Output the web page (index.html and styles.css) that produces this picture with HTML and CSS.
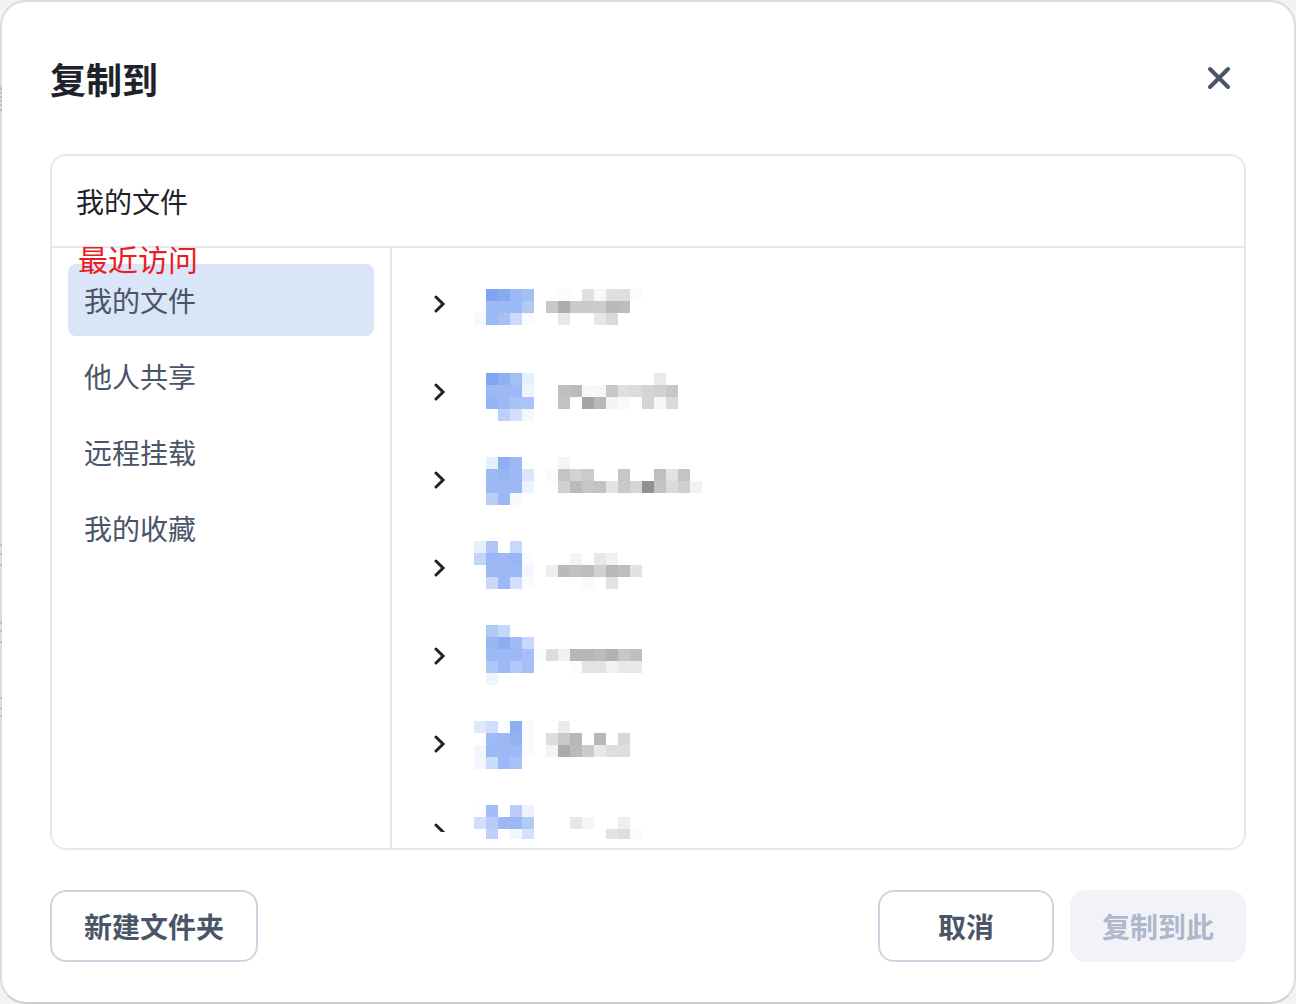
FILE: index.html
```html
<!DOCTYPE html>
<html lang="zh-CN">
<head>
<meta charset="utf-8">
<meta name="viewport" content="width=device-width, initial-scale=1">
<title>复制到</title>
<link rel="stylesheet" href="styles.css">
</head>
<body>
<main class="dialog" role="dialog" aria-labelledby="dialog-title">
  <svg class="edge-marks" width="2" height="720" viewBox="0 0 2 720" aria-hidden="true">
    <path d="M0 87h1M0 89h2M0 93h2M0 97h2M0 101h2M0 105h2M0 110h2M0 545h2M0 554h2M0 565h2M0 621l2 3M0 631h2M0 643l2-2M0 698h2M0 709l2-1M0 716h2"/>
  </svg>
  <header class="dialog-header">
    <h1 class="dialog-title" id="dialog-title">复制到</h1>
    <button class="close" type="button" aria-label="关闭">
      <svg width="24" height="24" viewBox="0 0 24 24" aria-hidden="true"><path d="M3 3l18 18M21 3L3 21"/></svg>
    </button>
  </header>

  <section class="picker">
    <div class="breadcrumb">我的文件</div>
    <div class="picker-body">
      <nav class="sidebar">
        <span class="annotation">最近访问</span>
        <a class="side-item active" href="#mine">我的文件</a>
        <a class="side-item" href="#shared">他人共享</a>
        <a class="side-item" href="#remote">远程挂载</a>
        <a class="side-item" href="#favorites">我的收藏</a>
      </nav>
      <ul class="folders">
        <li class="folder">
          <button class="toggle" type="button" aria-label="展开"><svg width="12" height="18" viewBox="0 0 12 18"><path d="M2 2l7 7-7 7"/></svg></button>
          <svg class="mosaic" width="240" height="88" viewBox="0 0 240 88" aria-hidden="true"><g transform="translate(0 29) scale(12)">
            <rect x="1" y="0" fill="#7fa4f2"/><rect x="2" y="0" fill="#86a9f0"/><rect x="3" y="0"/><rect x="4" y="0" fill="#a4bff6"/><rect x="7" y="0" fill="#fcfcfc"/><rect x="9" y="0" fill="#e0e0e0"/><rect x="10" y="0" fill="#f8f8f8"/><rect x="11" y="0" fill="#e0e0e0"/><rect x="12" y="0" fill="#dedede"/><rect x="13" y="0" fill="#fbfbfb"/>
            <rect x="1" y="1"/><rect x="2" y="1"/><rect x="3" y="1"/><rect x="4" y="1" fill="#b0c9f4"/><rect x="6" y="1" fill="#c8c8c8"/><rect x="7" y="1" fill="#acadaf"/><rect x="8" y="1" fill="#c9cacc"/><rect x="9" y="1" fill="#c9cacc"/><rect x="10" y="1" fill="#cbccce"/><rect x="11" y="1" fill="#b8babc"/><rect x="12" y="1" fill="#bdbdbf"/>
            <rect x="0" y="2" fill="#f4f9ff"/><rect x="1" y="2"/><rect x="2" y="2" fill="#a8c0f5"/><rect x="3" y="2" fill="#cadaf8"/><rect x="4" y="2" fill="#fbfcff"/><rect x="7" y="2" fill="#e8e8e8"/><rect x="10" y="2" fill="#e6e6e6"/><rect x="11" y="2" fill="#dadada"/>
          </g></svg>
        </li>
        <li class="folder">
          <button class="toggle" type="button" aria-label="展开"><svg width="12" height="18" viewBox="0 0 12 18"><path d="M2 2l7 7-7 7"/></svg></button>
          <svg class="mosaic" width="240" height="88" viewBox="0 0 240 88" aria-hidden="true"><g transform="translate(0 25) scale(12)">
            <rect x="1" y="0" fill="#7fa5f3"/><rect x="2" y="0" fill="#8eaff1"/><rect x="3" y="0" fill="#a4bff6"/><rect x="4" y="0" fill="#e6effd"/><rect x="15" y="0" fill="#e8ebea"/>
            <rect x="1" y="1"/><rect x="2" y="1"/><rect x="3" y="1"/><rect x="4" y="1" fill="#eef3fe"/><rect x="7" y="1" fill="#bebfc1"/><rect x="8" y="1" fill="#bcbcbc"/><rect x="9" y="1" fill="#f8f8f8"/><rect x="10" y="1" fill="#f7f7f7"/><rect x="11" y="1" fill="#c7c7c7"/><rect x="12" y="1" fill="#dfdfdf"/><rect x="13" y="1" fill="#dcdcdc"/><rect x="14" y="1" fill="#d4d4d4"/><rect x="15" y="1" fill="#d0d2d2"/><rect x="16" y="1" fill="#c6c7c9"/>
            <rect x="1" y="2" fill="#96b3f4"/><rect x="2" y="2"/><rect x="3" y="2" fill="#a8c1f6"/><rect x="4" y="2" fill="#abc3f7"/><rect x="7" y="2" fill="#c2c3c5"/><rect x="9" y="2" fill="#a4a4a6"/><rect x="10" y="2" fill="#b7b8ba"/><rect x="11" y="2" fill="#f5f5f5"/><rect x="12" y="2" fill="#f9f9f9"/><rect x="14" y="2" fill="#d5d5d5"/><rect x="15" y="2" fill="#f7f7f7"/><rect x="16" y="2" fill="#dbdbdb"/>
            <rect x="2" y="3" fill="#bdd1f8"/><rect x="3" y="3" fill="#d4e0fb"/><rect x="4" y="3" fill="#f5f8ff"/>
          </g></svg>
        </li>
        <li class="folder">
          <button class="toggle" type="button" aria-label="展开"><svg width="12" height="18" viewBox="0 0 12 18"><path d="M2 2l7 7-7 7"/></svg></button>
          <svg class="mosaic" width="240" height="88" viewBox="0 0 240 88" aria-hidden="true"><g transform="translate(0 21) scale(12)">
            <rect x="1" y="0" fill="#e6effc"/><rect x="2" y="0" fill="#8eaff1"/><rect x="3" y="0"/><rect x="7" y="0" fill="#f4f4f4"/>
            <rect x="1" y="1"/><rect x="2" y="1" fill="#97b4f3"/><rect x="3" y="1"/><rect x="4" y="1" fill="#dae6fb"/><rect x="6" y="1" fill="#fbfbfb"/><rect x="7" y="1" fill="#c4c4c4"/><rect x="8" y="1" fill="#d3d3d3"/><rect x="9" y="1" fill="#cbcbcb"/><rect x="12" y="1" fill="#c6c6c6"/><rect x="15" y="1" fill="#bebfc1"/><rect x="16" y="1" fill="#e2e2e2"/><rect x="17" y="1" fill="#c3c4c6"/>
            <rect x="1" y="2"/><rect x="2" y="2"/><rect x="3" y="2"/><rect x="4" y="2" fill="#eaf1ff"/><rect x="7" y="2" fill="#d0d0d0"/><rect x="8" y="2" fill="#b9babc"/><rect x="9" y="2" fill="#c6c6c8"/><rect x="10" y="2" fill="#c2c2c2"/><rect x="11" y="2" fill="#e3e3e3"/><rect x="12" y="2" fill="#c9c9cb"/><rect x="13" y="2" fill="#d5d5d5"/><rect x="14" y="2" fill="#909193"/><rect x="15" y="2" fill="#c2c3c5"/><rect x="16" y="2" fill="#dadada"/><rect x="17" y="2" fill="#cfcfcf"/><rect x="18" y="2" fill="#f2f2f2"/>
            <rect x="1" y="3" fill="#b9cdf8"/><rect x="2" y="3"/><rect x="3" y="3" fill="#f7f9ff"/>
          </g></svg>
        </li>
        <li class="folder">
          <button class="toggle" type="button" aria-label="展开"><svg width="12" height="18" viewBox="0 0 12 18"><path d="M2 2l7 7-7 7"/></svg></button>
          <svg class="mosaic" width="240" height="88" viewBox="0 0 240 88" aria-hidden="true"><g transform="translate(0 17) scale(12)">
            <rect x="0" y="0" fill="#e6effd"/><rect x="1" y="0" fill="#aec7f6"/><rect x="3" y="0" fill="#c7d8fa"/>
            <rect x="0" y="1" fill="#c2d5f8"/><rect x="1" y="1" fill="#9ab6f4"/><rect x="2" y="1"/><rect x="3" y="1" fill="#99b5f4"/><rect x="4" y="1" fill="#fafcff"/><rect x="8" y="1" fill="#f4f4f4"/><rect x="10" y="1" fill="#e7e7e7"/><rect x="11" y="1" fill="#f1f1f1"/>
            <rect x="1" y="2"/><rect x="2" y="2"/><rect x="3" y="2"/><rect x="4" y="2" fill="#f2f6ff"/><rect x="6" y="2" fill="#eeeeee"/><rect x="7" y="2" fill="#bababa"/><rect x="8" y="2" fill="#c1c1c1"/><rect x="9" y="2" fill="#bdbec0"/><rect x="10" y="2" fill="#d0d0d0"/><rect x="11" y="2" fill="#b8b8b8"/><rect x="12" y="2" fill="#bdbec0"/><rect x="13" y="2" fill="#e2e2e2"/>
            <rect x="1" y="3" fill="#cad9f8"/><rect x="2" y="3"/><rect x="3" y="3" fill="#d4e0fb"/><rect x="4" y="3" fill="#fafcff"/><rect x="9" y="3" fill="#fafafa"/><rect x="11" y="3" fill="#e0e3e2"/>
          </g></svg>
        </li>
        <li class="folder">
          <button class="toggle" type="button" aria-label="展开"><svg width="12" height="18" viewBox="0 0 12 18"><path d="M2 2l7 7-7 7"/></svg></button>
          <svg class="mosaic" width="240" height="88" viewBox="0 0 240 88" aria-hidden="true"><g transform="translate(0 13) scale(12)">
            <rect x="1" y="0" fill="#afc8f6"/><rect x="2" y="0" fill="#c6d8f9"/>
            <rect x="1" y="1" fill="#99b5f3"/><rect x="2" y="1" fill="#8dadf1"/><rect x="3" y="1" fill="#9fbaf5"/><rect x="4" y="1" fill="#c7d8fb"/>
            <rect x="1" y="2"/><rect x="2" y="2"/><rect x="3" y="2"/><rect x="4" y="2" fill="#a6bff7"/><rect x="5" y="2" fill="#fafdff"/><rect x="6" y="2" fill="#dcdcdc"/><rect x="7" y="2" fill="#f0f0f0"/><rect x="8" y="2" fill="#b6b7b9"/><rect x="9" y="2" fill="#b6b7b9"/><rect x="10" y="2" fill="#bbbcbe"/><rect x="11" y="2" fill="#b0b1b3"/><rect x="12" y="2" fill="#c5c6c8"/><rect x="13" y="2" fill="#bdbec0"/>
            <rect x="1" y="3" fill="#aec7f6"/><rect x="2" y="3"/><rect x="3" y="3" fill="#b2caf7"/><rect x="4" y="3" fill="#a6bff7"/><rect x="8" y="3" fill="#fcfcfc"/><rect x="9" y="3" fill="#e3e3e3"/><rect x="10" y="3" fill="#e3e3e3"/><rect x="11" y="3" fill="#f0f3f2"/><rect x="12" y="3" fill="#e9e9e9"/><rect x="13" y="3" fill="#e9e9e9"/>
            <rect x="1" y="4" fill="#eff5ff"/>
          </g></svg>
        </li>
        <li class="folder">
          <button class="toggle" type="button" aria-label="展开"><svg width="12" height="18" viewBox="0 0 12 18"><path d="M2 2l7 7-7 7"/></svg></button>
          <svg class="mosaic" width="240" height="88" viewBox="0 0 240 88" aria-hidden="true"><g transform="translate(0 21) scale(12)">
            <rect x="0" y="0" fill="#dfe9fd"/><rect x="1" y="0" fill="#cfdefb"/><rect x="2" y="0" fill="#fcfdff"/><rect x="3" y="0" fill="#8eaef2"/><rect x="4" y="0" fill="#f9fbff"/><rect x="7" y="0" fill="#ebebeb"/>
            <rect x="1" y="1" fill="#9fbaf5"/><rect x="2" y="1"/><rect x="3" y="1" fill="#93b2f3"/><rect x="4" y="1" fill="#f9fbff"/><rect x="6" y="1" fill="#dedede"/><rect x="7" y="1" fill="#c9c9cb"/><rect x="8" y="1" fill="#b7b8ba"/><rect x="10" y="1" fill="#b8b8b8"/><rect x="12" y="1" fill="#d6d9d8"/>
            <rect x="0" y="2" fill="#f1f6ff"/><rect x="1" y="2"/><rect x="2" y="2"/><rect x="3" y="2"/><rect x="4" y="2" fill="#f9fbff"/><rect x="6" y="2" fill="#f2f5f4"/><rect x="7" y="2" fill="#ababad"/><rect x="8" y="2" fill="#bababa"/><rect x="9" y="2" fill="#cbcbcb"/><rect x="10" y="2" fill="#e8e8e8"/><rect x="11" y="2" fill="#dedede"/><rect x="12" y="2" fill="#dcdedd"/>
            <rect x="0" y="3" fill="#f2f6ff"/><rect x="1" y="3" fill="#cadaf9"/><rect x="2" y="3"/><rect x="3" y="3" fill="#a9c2f6"/>
          </g></svg>
        </li>
        <li class="folder">
          <button class="toggle" type="button" aria-label="展开"><svg width="12" height="18" viewBox="0 0 12 18"><clipPath id="cut"><path d="M0 0h12v9H0z"/></clipPath><path clip-path="url(#cut)" d="M2 2l7 7-7 7"/></svg></button>
          <svg class="mosaic" width="240" height="88" viewBox="0 0 240 88" aria-hidden="true"><g transform="translate(0 17) scale(12)">
            <rect x="0" y="0" fill="#fcfdff"/><rect x="1" y="0" fill="#a3bcf6"/><rect x="3" y="0" fill="#bacdf8"/><rect x="4" y="0" fill="#eef2fe"/>
            <rect x="0" y="1" fill="#d1dffa"/><rect x="1" y="1" fill="#b8ccf7"/><rect x="2" y="1"/><rect x="3" y="1"/><rect x="4" y="1" fill="#b3caf6"/><rect x="8" y="1" fill="#e6e6e6"/><rect x="9" y="1" fill="#f3f6f5"/><rect x="12" y="1" fill="#efefef"/>
            <rect x="1" y="2" fill="#bdd0f9"/><rect x="3" y="2" fill="#f3f6ff"/><rect x="4" y="2" fill="#d5e1fc"/><rect x="11" y="2" fill="#e0e3e2"/><rect x="12" y="2" fill="#dedede"/><rect x="13" y="2" fill="#fafafa"/>
          </g></svg>
        </li>
      </ul>
    </div>
  </section>

  <footer class="actions">
    <button class="btn" type="button">新建文件夹</button>
    <div class="actions-end">
      <button class="btn" type="button">取消</button>
      <button class="btn btn-disabled" type="button" disabled>复制到此</button>
    </div>
  </footer>
</main>
</body>
</html>
```
FILE: styles.css
```css
* {
  box-sizing: border-box;
}

body {
  margin: 0;
  background: #f3f3f3;
  font-family: "Noto Sans CJK SC", "Noto Sans", sans-serif;
  font-size: 28px;
  line-height: 40px;
  color: #1f2329;
}

button {
  font: inherit;
  color: inherit;
  cursor: pointer;
}

.dialog {
  position: relative;
  display: flex;
  flex-direction: column;
  height: 100vh;
  padding: 48px 48px 40px;
  border: 2px solid #dcdcdc;
  border-bottom-color: #cfcfcf;
  border-radius: 26px;
  background: #fff;
}

.edge-marks {
  position: absolute;
  left: -2px;
  top: -2px;
  fill: none;
  stroke: #a3a3a3;
}

.dialog-header {
  display: flex;
  align-items: center;
  justify-content: space-between;
  height: 56px;
  margin-bottom: 48px;
}

.dialog-title {
  margin: 0;
  font-size: 36px;
  line-height: 56px;
  font-weight: 700;
}

.close {
  display: flex;
  margin-right: 15px;
  padding: 0;
  border: 0;
  background: none;
  color: #4a5568;
}

.close svg,
.toggle svg {
  fill: none;
  stroke: currentColor;
  stroke-linecap: round;
}

.close svg {
  stroke-width: 4;
}

.picker {
  display: flex;
  flex: 1;
  flex-direction: column;
  min-height: 0;
  border: 2px solid #e4e8ef;
  border-radius: 16px;
}

.breadcrumb {
  padding: 25px 24px;
  border-bottom: 2px solid #e4e8ef;
}

.picker-body {
  display: flex;
  flex: 1;
  min-height: 0;
}

.sidebar {
  position: relative;
  display: flex;
  flex: 0 0 340px;
  flex-direction: column;
  gap: 4px;
  padding: 16px;
  border-right: 2px solid #e4e8ef;
}

.annotation {
  position: absolute;
  left: 26px;
  top: -10px;
  font-size: 30px;
  line-height: 40px;
  color: #ed1c24;
}

.side-item {
  padding: 16px;
  border-radius: 8px;
  color: #4a5568;
  text-decoration: none;
}

.side-item.active {
  background: #dae5f7;
}

.folders {
  flex: 1;
  margin: 12px 0 9px;
  padding: 0 42px;
  overflow: hidden;
  list-style: none;
}

.folder {
  display: flex;
  align-items: center;
  gap: 28px;
  height: 88px;
}

.toggle {
  display: flex;
  padding: 0;
  border: 0;
  background: none;
}

.toggle svg {
  stroke-width: 3;
}

.mosaic {
  fill: #9cb8f5;
  shape-rendering: crispEdges;
}

.mosaic rect {
  width: 1px;
  height: 1px;
}

.actions {
  display: flex;
  justify-content: space-between;
  margin-top: 40px;
}

.actions-end {
  display: flex;
  gap: 16px;
}

.btn {
  height: 72px;
  min-width: 176px;
  padding: 0 32px;
  border: 2px solid #cbd5e1;
  border-radius: 16px;
  background: #fff;
  font-weight: 700;
  color: #4a5568;
}

.btn-disabled {
  border: 0;
  background: #f2f3f8;
  color: #adb8cc;
  cursor: default;
}
```
